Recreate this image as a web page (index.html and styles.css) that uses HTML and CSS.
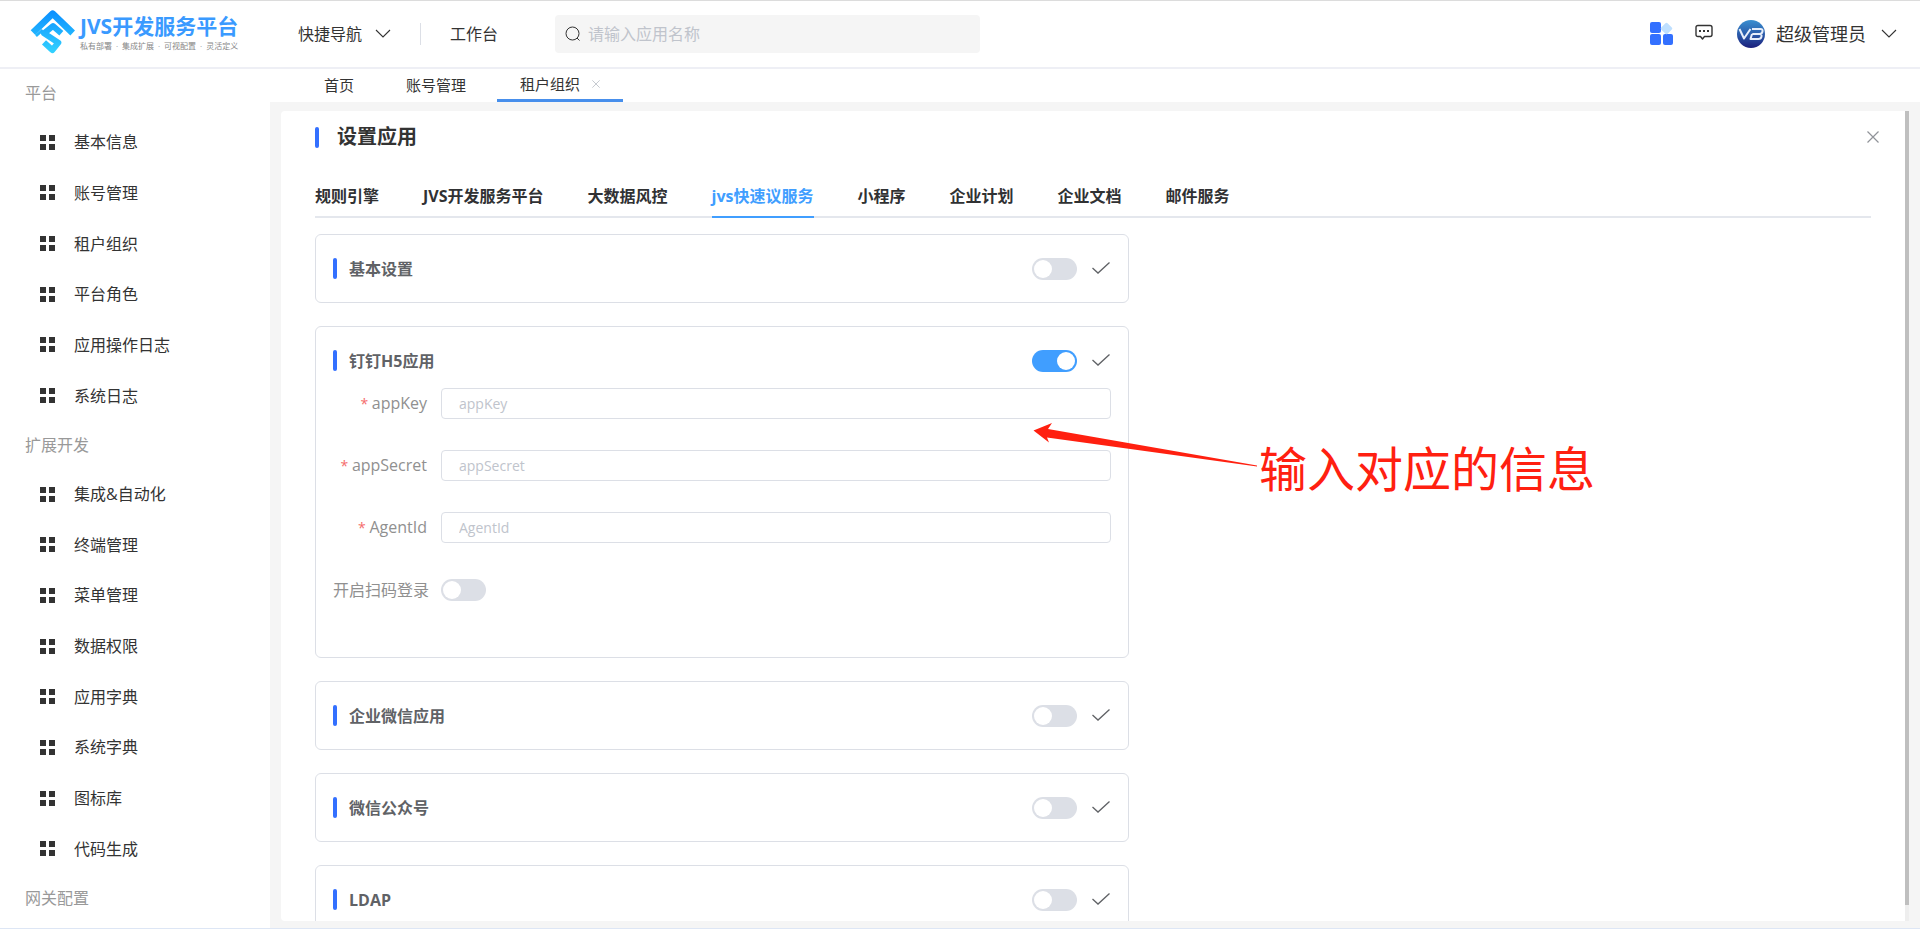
FILE: index.html
```html
<!DOCTYPE html>
<html lang="zh-CN">
<head>
<meta charset="utf-8">
<title>JVS开发服务平台</title>
<link rel="stylesheet" href="styles.css">
</head>
<body>
<svg class="defs" aria-hidden="true">
  <symbol id="grid" viewBox="0 0 15 15"><path d="M0 0h6v6H0zM9 0h6v6H9zM0 9h6v6H0zM9 9h6v6H9z" fill="#333"/></symbol>
  <symbol id="chevron" viewBox="0 0 16 16"><path d="M1 4l7 7 7-7" fill="none" stroke="currentColor" stroke-width="1.1"/></symbol>
  <symbol id="check" viewBox="0 0 18 18"><path d="M.5 9l5.500 5L17.500 3.500" fill="none" stroke="currentColor" stroke-width="1.300"/></symbol>
  <symbol id="close" viewBox="0 0 12 12"><path d="M.5.5l11 11M11.500.5l-11 11" fill="none" stroke="currentColor" stroke-width="1.200"/></symbol>
</svg>
<header class="header">
  <a class="brand" href="#">
    <svg class="brand-mark" viewBox="0 0 168 168" aria-hidden="true">
      <defs><linearGradient id="sky" gradientUnits="userSpaceOnUse" x1="80" y1="18" x2="80" y2="150"><stop offset="0" stop-color="#0a8dff"/><stop offset="1" stop-color="#34d4ff"/></linearGradient></defs>
      <g fill="none" stroke="url(#sky)" stroke-linejoin="round">
        <path d="M21 86L80 29l60 58" stroke-width="20"/>
        <path d="M30 96l20-18" stroke-width="8"/>
        <path d="M106 88L81 66 54 88l43 28-18 22-25-23" stroke-width="18"/>
      </g>
    </svg>
    <span class="brand-text"><strong class="brand-name">JVS开发服务平台</strong><small class="brand-slogan"><span>私有部署</span><span>·</span><span>集成扩展</span><span>·</span><span>可视配置</span><span>·</span><span>灵活定义</span></small></span>
  </a>
  <button class="quick-nav" type="button">快捷导航<svg class="icon-16"><use href="#chevron"/></svg></button>
  <span class="divider"></span>
  <a class="workbench" href="#">工作台</a>
  <label class="search">
    <svg class="search-icon" viewBox="0 0 16 16" aria-hidden="true"><circle cx="7.500" cy="7.500" r="6.500" fill="none" stroke="#333"/><path d="M12 12l2.500 2.500" stroke="#333"/></svg>
    <input class="search-input" type="text" placeholder="请输入应用名称" aria-label="请输入应用名称">
  </label>
  <div class="tools">
    <button class="tool" type="button" aria-label="应用">
      <svg class="icon-24" viewBox="0 0 24 24"><rect x="0" y="0" width="11" height="11" rx="2" fill="#3370ff"/><rect x="0" y="12" width="11" height="11" rx="2" fill="#3370ff"/><rect x="13" y="12" width="10" height="11" rx="2" fill="#3370ff"/><rect x="12" y="2" width="9" height="9" rx="1.500" fill="#bedfff" transform="rotate(45 16.500 6.500)"/></svg>
    </button>
    <button class="tool message" type="button" aria-label="消息">
      <svg class="icon-18" viewBox="0 0 18 18"><path d="M3 1.500h12q2 0 2 2v7q0 2-2 2H9.500L7.500 15l-2-2.500H3q-2 0-2-2v-7q0-2 2-2z" fill="none" stroke="#333" stroke-width="1.400" stroke-linejoin="round"/><path d="M4 6h2v2H4zM8 6h2v2H8zM12 6h2v2h-2z" fill="#333"/></svg>
    </button>
    <button class="account" type="button">
      <svg class="avatar" viewBox="0 0 28 28" aria-hidden="true"><defs><linearGradient id="navy" x1="0" y1="0" x2="0" y2="1"><stop offset="0" stop-color="#3a8fd0"/><stop offset=".5" stop-color="#2a5cab"/><stop offset="1" stop-color="#1b1f7c"/></linearGradient></defs><circle cx="14" cy="14" r="14" fill="url(#navy)"/><path d="M2.500 9l4.500 9.500L13.500 9M15 9h8.500q2.500 0 2 2.500t-3 2.500H16h6.500q2.500 0 2 2.500t-3 2.500H13.500l1.500-5" fill="none" stroke="#e6edfa" stroke-width="2" stroke-linejoin="round"/></svg>
      超级管理员<svg class="icon-16"><use href="#chevron"/></svg>
    </button>
  </div>
</header>
<div class="shell">
  <nav class="sidebar">
    <h2 class="group">平台</h2>
    <a class="item" href="#"><svg class="icon-15"><use href="#grid"/></svg>基本信息</a>
    <a class="item" href="#"><svg class="icon-15"><use href="#grid"/></svg>账号管理</a>
    <a class="item" href="#"><svg class="icon-15"><use href="#grid"/></svg>租户组织</a>
    <a class="item" href="#"><svg class="icon-15"><use href="#grid"/></svg>平台角色</a>
    <a class="item" href="#"><svg class="icon-15"><use href="#grid"/></svg>应用操作日志</a>
    <a class="item" href="#"><svg class="icon-15"><use href="#grid"/></svg>系统日志</a>
    <h2 class="group">扩展开发</h2>
    <a class="item" href="#"><svg class="icon-15"><use href="#grid"/></svg>集成&amp;自动化</a>
    <a class="item" href="#"><svg class="icon-15"><use href="#grid"/></svg>终端管理</a>
    <a class="item" href="#"><svg class="icon-15"><use href="#grid"/></svg>菜单管理</a>
    <a class="item" href="#"><svg class="icon-15"><use href="#grid"/></svg>数据权限</a>
    <a class="item" href="#"><svg class="icon-15"><use href="#grid"/></svg>应用字典</a>
    <a class="item" href="#"><svg class="icon-15"><use href="#grid"/></svg>系统字典</a>
    <a class="item" href="#"><svg class="icon-15"><use href="#grid"/></svg>图标库</a>
    <a class="item" href="#"><svg class="icon-15"><use href="#grid"/></svg>代码生成</a>
    <h2 class="group">网关配置</h2>
  </nav>
  <div class="workspace">
    <nav class="page-tabs">
      <a class="page-tab" href="#">首页</a>
      <a class="page-tab" href="#">账号管理</a>
      <a class="page-tab current" href="#">租户组织<svg class="tab-close"><use href="#close"/></svg></a>
    </nav>
    <main class="panel">
      <div class="content">
        <div class="title-row">
          <h1 class="title">设置应用</h1>
          <button class="close" type="button" aria-label="关闭"><svg class="icon-12"><use href="#close"/></svg></button>
        </div>
        <nav class="app-tabs">
          <a class="app-tab" href="#">规则引擎</a>
          <a class="app-tab" href="#">JVS开发服务平台</a>
          <a class="app-tab" href="#">大数据风控</a>
          <a class="app-tab selected" href="#">jvs快速议服务</a>
          <a class="app-tab" href="#">小程序</a>
          <a class="app-tab" href="#">企业计划</a>
          <a class="app-tab" href="#">企业文档</a>
          <a class="app-tab" href="#">邮件服务</a>
        </nav>
        <div class="cards">
          <section class="card">
            <div class="card-head"><h3 class="card-title">基本设置</h3><input class="switch" type="checkbox" aria-label="基本设置"><button class="confirm" type="button" aria-label="确认"><svg class="icon-18"><use href="#check"/></svg></button></div>
          </section>
          <section class="card">
            <div class="card-head"><h3 class="card-title">钉钉H5应用</h3><input class="switch" type="checkbox" checked aria-label="钉钉H5应用"><button class="confirm" type="button" aria-label="确认"><svg class="icon-18"><use href="#check"/></svg></button></div>
            <form class="form">
              <label class="label required" for="appKey">appKey</label><input class="field" id="appKey" type="text" placeholder="appKey">
              <label class="label required" for="appSecret">appSecret</label><input class="field" id="appSecret" type="text" placeholder="appSecret">
              <label class="label required" for="agentId">AgentId</label><input class="field" id="agentId" type="text" placeholder="AgentId">
              <label class="label" for="scan">开启扫码登录</label><input class="switch" id="scan" type="checkbox">
            </form>
            <div class="note">
              <svg class="arrow" viewBox="0 0 226 46" aria-hidden="true"><path d="M.5 8.500L19 1l-4 6 209 36.500v1L14 15.500l2 5z" fill="#ff2010"/></svg>
              <span class="note-text">输入对应的信息</span>
            </div>
          </section>
          <section class="card">
            <div class="card-head"><h3 class="card-title">企业微信应用</h3><input class="switch" type="checkbox" aria-label="企业微信应用"><button class="confirm" type="button" aria-label="确认"><svg class="icon-18"><use href="#check"/></svg></button></div>
          </section>
          <section class="card">
            <div class="card-head"><h3 class="card-title">微信公众号</h3><input class="switch" type="checkbox" aria-label="微信公众号"><button class="confirm" type="button" aria-label="确认"><svg class="icon-18"><use href="#check"/></svg></button></div>
          </section>
          <section class="card">
            <div class="card-head"><h3 class="card-title">LDAP</h3><input class="switch" type="checkbox" aria-label="LDAP"><button class="confirm" type="button" aria-label="确认"><svg class="icon-18"><use href="#check"/></svg></button></div>
          </section>
        </div>
      </div>
      <div class="scrollbar"><div class="thumb"></div></div>
    </main>
  </div>
</div>
</body>
</html>
```
FILE: styles.css
```css
* { box-sizing: border-box; }
body {
  margin: 0;
  height: 100vh;
  display: flex;
  flex-direction: column;
  overflow: hidden;
  border-top: 1px solid #dcdcdc;
  border-bottom: 1px solid #dde6f5;
  background: #fff;
  color: #333;
  font: 16px/24px "Open Sans", "Noto Sans CJK SC", sans-serif;
}
h1, h2, h3 { margin: 0; font-weight: 400; }
a { color: inherit; text-decoration: none; }
button { display: flex; align-items: center; padding: 0; border: 0; background: none; color: inherit; font: inherit; }
svg { display: block; flex: none; }
.defs { position: absolute; width: 0; height: 0; }
.icon-12 { width: 12px; height: 12px; }
.icon-15 { width: 15px; height: 15px; }
.icon-16 { width: 16px; height: 16px; }
.icon-18 { width: 18px; height: 18px; }
.icon-24 { width: 24px; height: 24px; }

.header {
  flex: none;
  display: flex;
  align-items: center;
  height: 68px;
  padding: 0 23px 0 26px;
  border-bottom: 2px solid #eeeff5;
}
.brand { display: flex; align-items: center; width: 272px; padding-bottom: 4px; }
.brand-mark { width: 56px; height: 56px; margin-right: -2px; }
.brand-text { display: flex; flex-direction: column; white-space: nowrap; }
.brand-name { color: #3a9aff; font-size: 21px; line-height: 28px; font-weight: 700; }
.brand-slogan { display: flex; justify-content: space-between; color: #888; font-size: 8px; line-height: 12px; }
.quick-nav { gap: 13px; }
.divider { width: 1px; height: 22px; margin: 0 29px; background: #dcdfe6; }
.search {
  display: flex;
  align-items: center;
  gap: 7px;
  flex: 0 1 425px;
  height: 38px;
  margin-left: 57px;
  padding: 0 10px;
  border-radius: 4px;
  background: #f5f5f5;
}
.search-icon { width: 16px; height: 16px; }
.search-input { flex: 1; min-width: 0; padding: 0; border: 0; background: none; font: inherit; }
.search-input::placeholder, .field::placeholder { color: #c0c4cc; opacity: 1; }
.tools { display: flex; align-items: center; margin-left: auto; }
.message { margin: 0 24px 2px 21px; }
.account { gap: 11px; font-size: 18px; }
.account .icon-16 { margin-left: 4px; }
.avatar { width: 28px; height: 28px; }

.shell { flex: 1; min-height: 0; display: flex; }
.sidebar { flex: none; display: flex; flex-direction: column; width: 270px; padding-bottom: 6px; overflow: hidden; }
.group { flex: none; height: 48px; padding: 12px 25px 0; color: #999; font-size: 16px; line-height: 24px; }
.item { flex: 1 0 36px; display: flex; align-items: center; gap: 19px; padding-left: 40px; }

.workspace { flex: 1; min-width: 0; display: flex; flex-direction: column; background: #f5f5f5; }
.page-tabs { flex: none; display: flex; height: 33px; padding-left: 28px; background: #fff; font-size: 15px; }
.page-tab { display: flex; align-items: center; padding: 0 26px 1px; }
.page-tab.current { gap: 12px; margin-left: 5px; padding: 0 23px 1px; border-bottom: 3px solid #478fec; }
.tab-close { width: 8px; height: 8px; color: #b8bcc4; }

.panel { flex: 1; min-height: 0; display: flex; margin: 9px 11px 7px; background: #fff; overflow: hidden; border-radius: 4px 0 0 4px; }
.content { flex: 1; min-width: 0; padding: 14px 34px 0; }
.scrollbar { flex: none; width: 4px; background: #eee; }
.thumb { height: 98%; background: #bfbfbf; }
.title-row { display: flex; align-items: center; justify-content: space-between; height: 24px; }
.title { display: flex; align-items: center; gap: 18px; font-size: 20px; font-weight: 700; }
.title::before { content: ""; width: 4px; height: 21px; border-radius: 2px; background: #3370ff; }
.close { margin-right: -8px; color: #909399; }
.app-tabs { display: flex; gap: 44px; margin-top: 24px; height: 45px; border-bottom: 2px solid #e4e7ed; font-weight: 700; color: #303133; white-space: nowrap; }
.app-tab { height: 45px; padding-top: 11px; }
.app-tab.selected { color: #409eff; border-bottom: 2px solid #409eff; }

.cards { display: flex; flex-direction: column; gap: 23px; width: calc(50% + 36px); margin-top: 16px; }
.card { position: relative; padding: 22px 17px; border: 1px solid #dcdfe6; border-radius: 6px; color: #606266; }
.card-head { display: flex; align-items: center; height: 23px; }
.card-title { display: flex; align-items: center; gap: 12px; margin-right: auto; font-size: 16px; font-weight: 700; }
.card-title::before { content: ""; width: 4px; height: 21px; border-radius: 2px; background: #3370ff; }
.confirm { margin: 0 1px 2px 15px; }
.switch {
  appearance: none;
  display: flex;
  width: 45px;
  height: 22px;
  margin: 0;
  padding: 2px;
  border-radius: 11px;
  background: #dcdfe6;
}
.switch::before { content: ""; width: 18px; height: 18px; border-radius: 50%; background: #fff; }
.switch:checked { justify-content: flex-end; background: #409eff; }
.form { display: grid; grid-template-columns: 96px 1fr; grid-auto-rows: 31px; align-items: center; gap: 31px 12px; padding: 16px 0 30px; }
.label { justify-self: end; color: #909090; white-space: nowrap; }
.required { padding-right: 2px; }
.required::before { content: "* "; color: #f56c6c; font-size: 14px; }
.field { width: 100%; height: 31px; padding: 0 17px; border: 1px solid #dcdfe6; border-radius: 4px; background: #fff; color: #606266; font: inherit; font-size: 14px; }
.note { position: absolute; top: 95px; left: calc(100% - 95px); color: #ff2010; }
.arrow { width: 226px; height: 46px; }
.note-text { position: absolute; top: 17px; left: 226px; font-size: 48px; line-height: 60px; white-space: nowrap; }
```
